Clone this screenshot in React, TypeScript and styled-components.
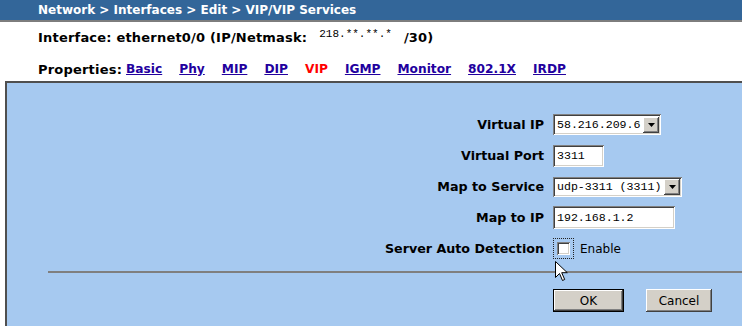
import React from "react";
import styled, { createGlobalStyle } from "styled-components";

const GlobalStyle = createGlobalStyle`
  html, body {
    margin: 0;
    padding: 0;
    background: #ffffff;
  }
  body {
    font-family: "DejaVu Sans", Verdana, sans-serif;
    color: #000;
  }
`;

const Page = styled.div`
  display: flex;
  flex-direction: column;
  min-height: 100vh;
  position: relative;
  overflow: hidden;
`;

const TitleBar = styled.div`
  height: 20px;
  line-height: 20px;
  padding-left: 38px;
  background: #336699;
  border-bottom: 2px solid #7d7d7d;
  color: #fff;
  font-weight: bold;
  font-size: 12px;
  white-space: nowrap;
`;

const InfoBlock = styled.div`
  padding-left: 38px;
  font-weight: bold;
  font-size: 13px;
  letter-spacing: 0.2px;
`;

const InfoRow = styled.div<{ $height: number; $top?: number }>`
  display: flex;
  align-items: center;
  height: ${(p) => p.$height}px;
  margin-top: ${(p) => p.$top ?? 0}px;
  white-space: nowrap;
`;

const MaskText = styled.span`
  font-family: "Liberation Mono", "DejaVu Sans Mono", monospace;
  font-weight: normal;
  font-size: 11px;
  letter-spacing: 0;
  margin: 0 12px 0 12px;
  position: relative;
  top: -3px;
`;

const TabLinks = styled.nav`
  display: flex;
  gap: 17px;
  margin-left: 4px;
  font-size: 12.2px;
  letter-spacing: 0;
`;

const TabLink = styled.a<{ $active?: boolean }>`
  color: ${(p) => (p.$active ? "#ff0000" : "#22009e")};
  text-decoration: ${(p) => (p.$active ? "none" : "underline")};
  cursor: pointer;
`;

const Panel = styled.div`
  flex: 1;
  margin-left: 5px;
  background: #a6c9f0;
  border-left: 2px solid #4f4f4f;
  border-top: 2px solid #4f4f4f;
`;

const Form = styled.div`
  display: grid;
  grid-template-columns: 537px auto;
  grid-auto-rows: 31px;
  column-gap: 9px;
  align-items: center;
  justify-items: start;
  padding-top: 26px;
`;

const Label = styled.label`
  justify-self: end;
  font-weight: bold;
  font-size: 12.7px;
  white-space: nowrap;
`;

const sunken = `
  background: #fff;
  box-shadow: inset 1px 1px #808080, inset -1px -1px #ffffff,
    inset 2px 2px #404040, inset -2px -2px #d4d0c8;
`;

const TextInput = styled.div<{ $width: number; $height: number }>`
  ${sunken}
  box-sizing: border-box;
  width: ${(p) => p.$width}px;
  height: ${(p) => p.$height}px;
  padding: 0 4px;
  display: flex;
  align-items: center;
  white-space: nowrap;
  font-family: "Liberation Mono", "DejaVu Sans Mono", monospace;
  font-size: 11.6px;
`;

const SelectBox = styled(TextInput)`
  padding: 0 2px 0 4px;
  justify-content: space-between;
`;

const ArrowButton = styled.span`
  flex: none;
  width: 16px;
  height: 16px;
  background: #d4d0c8;
  box-shadow: inset -1px -1px #404040, inset 1px 1px #ffffff,
    inset -2px -2px #808080;
  display: flex;
  align-items: center;
  justify-content: center;
`;

const CheckWrap = styled.div`
  display: flex;
  align-items: center;
  gap: 6px;
  font-size: 12px;
`;

const FocusRing = styled.span`
  display: flex;
  padding: 3px;
  border: 1px dotted #222;
`;

const CheckBox = styled.span`
  ${sunken}
  width: 13px;
  height: 13px;
`;

const Rule = styled.div`
  margin: 7px 0 0 41px;
  height: 2px;
  background: #7f7f7f;
`;

const ButtonRow = styled.div`
  display: flex;
  gap: 22px;
  padding: 16px 0 0 546px;
`;

const Button = styled.button<{ $default?: boolean; $width: number }>`
  box-sizing: border-box;
  width: ${(p) => p.$width}px;
  height: 23px;
  background: #d4d0c8;
  border: ${(p) => (p.$default ? "1px solid #000" : "none")};
  box-shadow: inset -1px -1px #404040, inset 1px 1px #ffffff,
    inset -2px -2px #808080;
  font-family: "DejaVu Sans", Verdana, sans-serif;
  font-size: 12px;
  color: #000;
  padding: 0;
`;

const Cursor = styled.svg`
  position: absolute;
  left: 555px;
  top: 261px;
`;

const DownArrow = () => (
  <svg width="7" height="4" viewBox="0 0 7 4">
    <path d="M0 0h7L3.5 4z" fill="#000" />
  </svg>
);

const Select: React.FC<{ value: string; width: number; height: number }> = ({
  value,
  width,
  height,
}) => (
  <SelectBox $width={width} $height={height}>
    <span>{value}</span>
    <ArrowButton>
      <DownArrow />
    </ArrowButton>
  </SelectBox>
);

const tabs = ["Basic", "Phy", "MIP", "DIP", "VIP", "IGMP", "Monitor", "802.1X", "IRDP"];

export default function App() {
  return (
    <Page>
      <GlobalStyle />
      <TitleBar>Network &gt; Interfaces &gt; Edit &gt; VIP/VIP Services</TitleBar>
      <InfoBlock>
        <InfoRow $height={30}>
          Interface: ethernet0/0 (IP/Netmask:
          <MaskText>218.**.**.*</MaskText>
          /30)
        </InfoRow>
        <InfoRow $height={24} $top={5}>
          Properties:
          <TabLinks>
            {tabs.map((t) => (
              <TabLink key={t} $active={t === "VIP"}>
                {t}
              </TabLink>
            ))}
          </TabLinks>
        </InfoRow>
      </InfoBlock>
      <Panel>
        <Form>
          <Label>Virtual IP</Label>
          <Select value="58.216.209.6" width={108} height={21} />
          <Label>Virtual Port</Label>
          <TextInput $width={51} $height={22}>3311</TextInput>
          <Label>Map to Service</Label>
          <Select value="udp-3311 (3311)" width={129} height={20} />
          <Label>Map to IP</Label>
          <TextInput $width={122} $height={23}>192.168.1.2</TextInput>
          <Label>Server Auto Detection</Label>
          <CheckWrap>
            <FocusRing>
              <CheckBox />
            </FocusRing>
            Enable
          </CheckWrap>
        </Form>
        <Rule />
        <ButtonRow>
          <Button $default $width={71}>OK</Button>
          <Button $width={66}>Cancel</Button>
        </ButtonRow>
      </Panel>
      <Cursor width="13" height="21" viewBox="0 0 13 21">
        <path
          d="M0.5 0.5v16l4-4 3 7 2.2-1-3-6.8h5.6z"
          fill="#fff"
          stroke="#000"
          strokeWidth="1"
        />
      </Cursor>
    </Page>
  );
}
